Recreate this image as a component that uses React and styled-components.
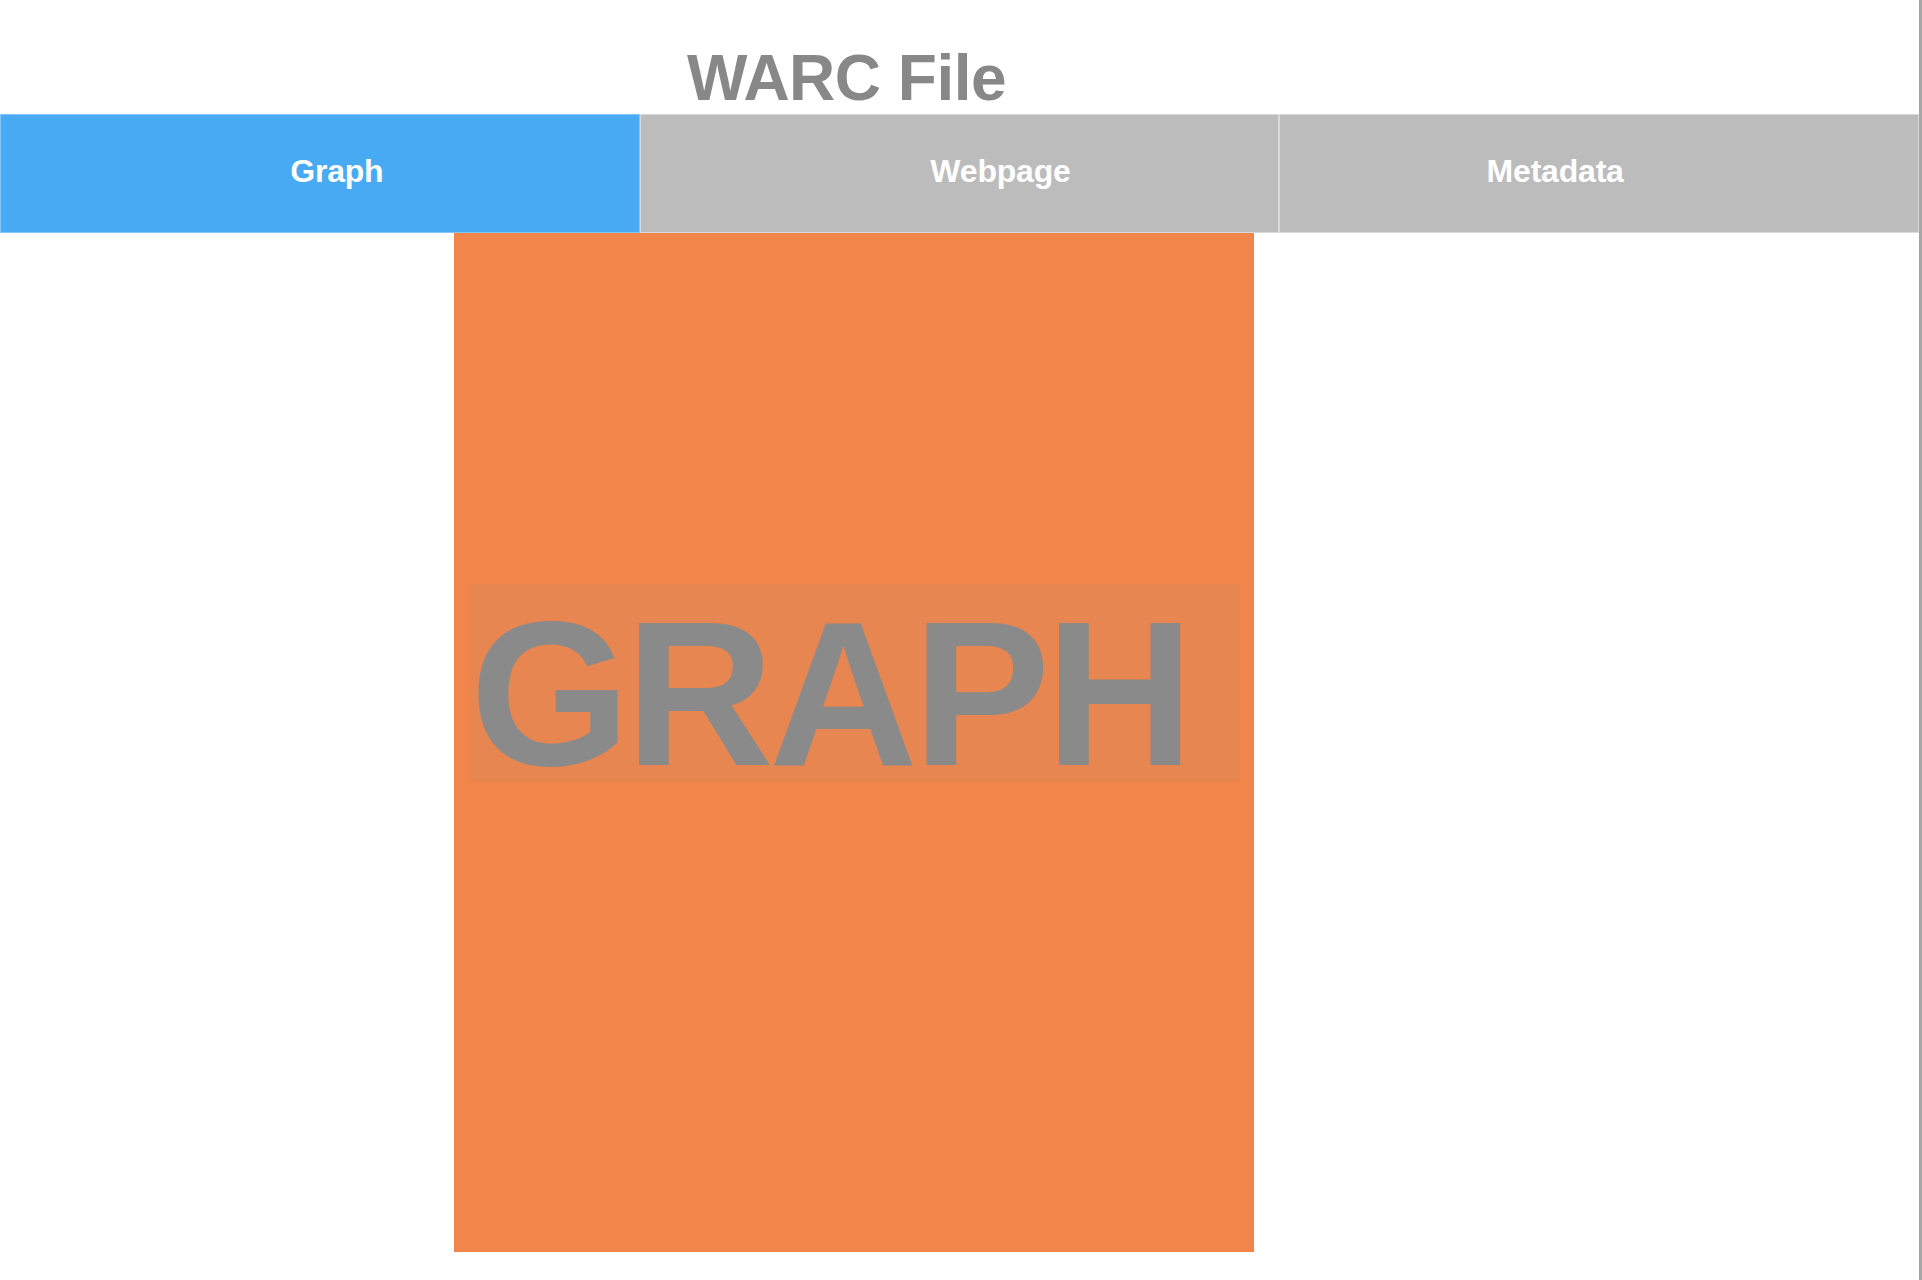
import React from "react";
import styled, { createGlobalStyle } from "styled-components";

const GlobalStyle = createGlobalStyle`
  html, body {
    margin: 0;
    padding: 0;
    background: #ffffff;
    font-family: "Liberation Sans", Helvetica, Arial, sans-serif;
  }
  * { box-sizing: border-box; }
`;

const Page = styled.div`
  display: flex;
  min-height: 100vh;
  width: 1922px;
`;

const Main = styled.div`
  width: 1919px;
  display: flex;
  flex-direction: column;
`;

const Edge = styled.div`
  width: 3px;
  background: #a6a6a6;
`;

const Header = styled.header`
  height: 114px;
  padding-top: 42px;
  padding-left: 687px;
`;

const Title = styled.h1`
  margin: 0;
  font-size: 64px;
  line-height: 73px;
  font-weight: 700;
  letter-spacing: -0.5px;
  color: #888888;
`;

const TabBar = styled.nav`
  display: grid;
  grid-template-columns: repeat(3, 1fr);
  height: 119px;
`;

const Tab = styled.button`
  display: flex;
  align-items: center;
  justify-content: center;
  border: 1px solid ${(p) => (p.$active ? "#86c5f4" : "#dadada")};
  background: ${(p) => (p.$active ? "#47aaf2" : "#bcbcbc")};
  color: #ffffff;
  font-family: "Liberation Sans", Helvetica, Arial, sans-serif;
  font-weight: 700;
  font-size: 32px;
  letter-spacing: -0.2px;
  padding: 0 ${(p) => Math.max(0, -p.$shift * 2)}px 5px ${(p) => Math.max(0, p.$shift * 2)}px;
  cursor: pointer;
`;

const Content = styled.section`
  padding-left: 454px;
`;

const Panel = styled.div`
  width: 800px;
  height: 1019px;
  background: #f2864a;
  padding-top: 351px;
`;

const Banner = styled.div`
  margin: 0 14px 0 16px;
  height: 198px;
  padding-top: 25px;
  background: rgba(136, 136, 136, 0.1);
  color: #8a8a8a;
  font-size: 206px;
  font-weight: 700;
  line-height: 170px;
  letter-spacing: -5px;
  white-space: nowrap;
`;

const tabs = [
  { label: "Graph", shift: 17, active: true },
  { label: "Webpage", shift: 41 },
  { label: "Metadata", shift: -44 },
];

export default function App() {
  return (
    <>
      <GlobalStyle />
      <Page>
        <Main>
          <Header>
            <Title>WARC File</Title>
          </Header>
          <TabBar>
            {tabs.map((t) => (
              <Tab key={t.label} $active={t.active} $shift={t.shift}>
                {t.label}
              </Tab>
            ))}
          </TabBar>
          <Content>
            <Panel>
              <Banner>GRAPH</Banner>
            </Panel>
          </Content>
        </Main>
        <Edge />
      </Page>
    </>
  );
}
